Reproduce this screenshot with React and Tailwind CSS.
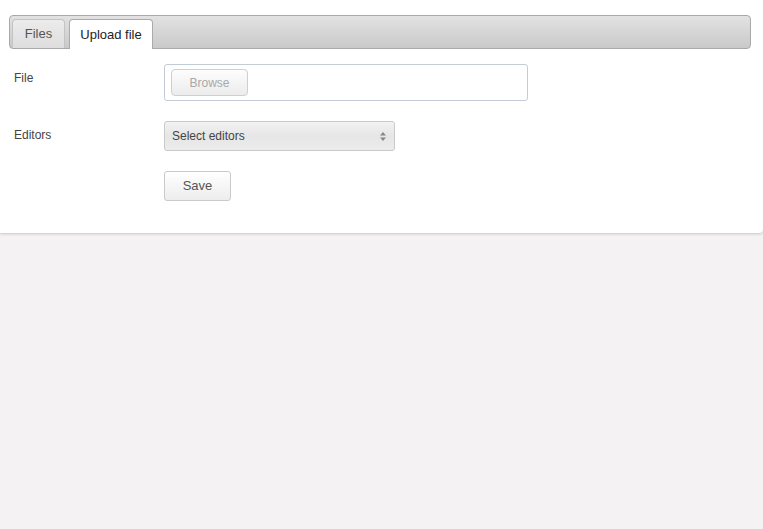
import React from "react";

const App = () => {
  return (
    <div className="w-[763px] h-[529px] bg-[#f4f2f3] font-['Liberation_Sans',Arial,sans-serif] text-[13px] text-[#333]">
      {/* panel */}
      <div className="bg-white h-[233px] rounded-br-[4px] shadow-[0_1px_3px_rgba(0,0,0,0.18)] pt-[15px] px-[9px]">
        {/* tab bar */}
        <div className="w-[742px] h-[34px] rounded-[4px] border border-[#a9a9a9] bg-gradient-to-b from-[#e2e2e2] to-[#c9c9c9] flex items-end gap-[4px] pl-[2px]">
          <div className="w-[53px] h-[29px] rounded-t-[4px] border border-b-0 border-[#c4c4c4] bg-gradient-to-b from-[#ececec] to-[#dedede] flex items-center justify-center text-[#555]">
            Files
          </div>
          <div className="w-[84px] h-[30px] rounded-t-[4px] border border-b-0 border-[#aaa] bg-white flex items-center justify-center text-[#222] mb-[-1px]">
            Upload file
          </div>
        </div>

        {/* form */}
        <div className="flex flex-col mt-[15px]">
          <div className="flex items-start">
            <div className="w-[155px] pl-[5px] pt-[5px] text-[12px] text-[#444]">File</div>
            <div className="w-[364px] h-[37px] border border-[#c4ccd6] rounded-[3px] flex items-center pl-[6px]">
              <div className="w-[77px] h-[27px] rounded-[4px] border border-[#cfcfcf] bg-gradient-to-b from-[#fdfdfd] to-[#ececec] flex items-center justify-center text-[12px] text-[#a8a8a8]">
                Browse
              </div>
            </div>
          </div>

          <div className="flex items-start mt-[20px]">
            <div className="w-[155px] pl-[5px] pt-[5px] text-[12px] text-[#444]">Editors</div>
            <div className="w-[231px] h-[30px] border border-[#cacaca] rounded-[3px] bg-gradient-to-b from-[#f2f2f2] via-[#e6e6e6] to-[#ececec] flex items-center justify-between pl-[7px] pr-[8px] text-[12px] text-[#444]">
              <span>Select editors</span>
              <svg width="6" height="9" viewBox="0 0 6 9">
                <path d="M3 0 L6 3.5 L0 3.5 Z" fill="#888" />
                <path d="M3 9 L6 5.5 L0 5.5 Z" fill="#888" />
              </svg>
            </div>
          </div>

          <div className="flex mt-[20px]">
            <div className="w-[155px]" />
            <div className="w-[67px] h-[30px] rounded-[3px] border border-[#cacaca] bg-gradient-to-b from-[#ffffff] to-[#ededed] flex items-center justify-center text-[#555]">
              Save
            </div>
          </div>
        </div>
      </div>
    </div>
  );
};

export default App;
